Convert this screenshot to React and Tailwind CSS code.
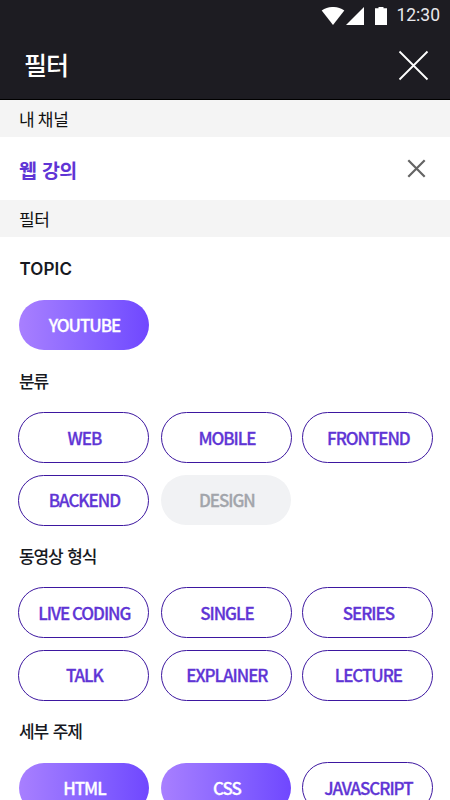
import React from "react";
import clsx from "clsx";

const sections = [
    {
        title: "TOPIC",
        latin: true,
        items: [{ label: "YOUTUBE", state: "selected" }],
    },
    {
        title: "분류",
        items: [
            { label: "WEB" },
            { label: "MOBILE" },
            { label: "FRONTEND" },
            { label: "BACKEND" },
            { label: "DESIGN", state: "disabled" },
        ],
    },
    {
        title: "동영상 형식",
        items: [
            { label: "LIVE CODING" },
            { label: "SINGLE" },
            { label: "SERIES" },
            { label: "TALK" },
            { label: "EXPLAINER" },
            { label: "LECTURE" },
        ],
    },
    {
        title: "세부 주제",
        items: [
            { label: "HTML", state: "selected" },
            { label: "CSS", state: "selected" },
            { label: "JAVASCRIPT" },
        ],
    },
];

const StatusBar = () => (
    <div className="flex h-[31px] items-center justify-end pr-[10px] text-white">
        <svg width="24" height="18" viewBox="0 0 24 18" fill="currentColor">
            <path d="M0.7 3.5C7.5-1.2 16.5-1.2 23.3 3.5L12 18Z" />
        </svg>
        <svg className="ml-[1px]" width="18" height="18" viewBox="0 0 18 18" fill="currentColor">
            <path d="M0 18L18 0V18Z" />
        </svg>
        <svg className="ml-[11px]" width="12" height="18" viewBox="0 0 12 18" fill="currentColor">
            <path d="M3.5 0H8.5V1.2H12V18H0V1.2H3.5Z" />
        </svg>
        <span className="ml-[9px] font-['Roboto',sans-serif] text-[17.5px] leading-none text-[#e8e8ec]">
            12:30
        </span>
    </div>
);

const Bar = ({ children }) => (
    <div className="flex h-[37px] items-center bg-[#f4f4f4] pl-[19px] text-[17px] tracking-[-0.3px] text-[#111111]">
        {children}
    </div>
);

const Pill = ({ label, state }) => (
    <button
        className={clsx(
            "flex items-center justify-center rounded-full pl-[1px] text-[17px] font-medium tracking-[-1.05px] whitespace-nowrap [-webkit-text-stroke:0.3px]",
            state && "ml-[0.5px] h-[50px] w-[130px]",
            state === "selected" &&
                "bg-linear-to-r from-[#a87fff] to-[#7047ff] text-white",
            state === "disabled" && "bg-[#f1f2f4] text-[#a2a5ab]",
            !state && "-mt-[0.5px] h-[51px] w-[131px] border border-[#3d17a0] text-[#5f35d5]"
        )}
    >
        {label}
    </button>
);

const App = () => {
    return (
        <div className="h-[800px] w-[450px] overflow-hidden bg-white font-['Noto_Sans_CJK_KR',sans-serif]">

            {/* Header */}
            <header className="h-[100px] border-b border-black bg-[#1d1c22]">
                <StatusBar />
                <div className="flex h-[68px] items-center justify-between pr-[21px] pl-[24px] text-white">
                    <h1 className="pb-[1px] text-[25px] font-medium tracking-[-1px]">필터</h1>
                    <svg width="31" height="31" viewBox="0 0 31 31" stroke="currentColor" strokeWidth="1.8">
                        <path d="M1.5 1.5L29.5 29.5M29.5 1.5L1.5 29.5" />
                    </svg>
                </div>
            </header>

            {/* My channel */}
            <Bar>내 채널</Bar>
            <div className="flex h-[63px] items-center justify-between pr-[24px] pl-[19px]">
                <span className="pt-[3px] text-[19.5px] font-bold tracking-[-0.7px] text-[#5f35d5] [word-spacing:2px]">
                    웹 강의
                </span>
                <svg width="19" height="19" viewBox="0 0 19 19" stroke="#646464" strokeWidth="2.2">
                    <path d="M1.3 1.3L17.7 17.7M17.7 1.3L1.3 17.7" />
                </svg>
            </div>

            {/* Filters */}
            <Bar>필터</Bar>
            <div className="pt-[0.5px] pl-[18.4px]">
                {sections.map((section) => (
                    <section key={section.title}>
                        <h2
                            className={clsx(
                                "flex h-[62.5px] items-center text-[17px] text-[#17191f]",
                                section.latin
                                    ? "pt-[2px] pl-[1px] font-['Inter',sans-serif] font-semibold tracking-[0.15px]"
                                    : "pb-[2px] pl-[0.5px] font-medium tracking-[-1.1px] [word-spacing:2px]"
                            )}
                        >
                            {section.title}
                        </h2>
                        <div className="grid auto-rows-[50px] grid-cols-[142.5px_141.5px_131px] gap-y-[12.5px]">
                            {section.items.map((item) => (
                                <Pill key={item.label} {...item} />
                            ))}
                        </div>
                    </section>
                ))}
            </div>
        </div>
    );
};

export default App;
